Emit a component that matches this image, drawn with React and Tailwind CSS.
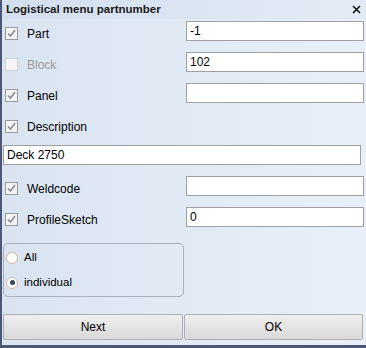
import { useState } from 'react';

function Check({ checked = true, disabled = false }) {
  return (
    <span
      className={`flex h-[13px] w-[13px] items-center justify-center border bg-[#f4f4f4] ${
        disabled ? 'border-[#d0d4da]' : 'border-[#9a9a9a]'
      }`}
    >
      {checked && (
        <svg width="9" height="9" viewBox="0 0 9 9">
          <path d="M1 4.5 L3.5 7 L8 1" fill="none" stroke="#8a8a8a" strokeWidth="1.5" />
        </svg>
      )}
    </span>
  );
}

function Field({ value = '', className = '' }) {
  return (
    <div
      className={`flex h-[20px] items-center border border-[#a0a0a0] bg-white px-[3px] text-[12px] text-black ${className}`}
    >
      {value}
    </div>
  );
}

function Row({ label, value, checked = true, disabled = false, noInput = false }) {
  return (
    <div className="flex h-[31px] items-start">
      <div className="mt-[6px] flex h-[13px] w-[181px] items-center pl-[3px]">
        <Check checked={checked} disabled={disabled} />
        <span className={`ml-[9px] text-[12px] ${disabled ? 'text-[#9a9a9a]' : 'text-black'}`}>{label}</span>
      </div>
      {!noInput && <Field value={value} className="ml-[3px] w-[178px]" />}
    </div>
  );
}

function Radio({ on }) {
  return (
    <span className="flex h-[12px] w-[12px] items-center justify-center rounded-full border border-[#d8b8a0] bg-white">
      {on && <span className="h-[5px] w-[5px] rounded-full bg-[#3a4660]" />}
    </span>
  );
}

export default function App() {
  const [mode, setMode] = useState('individual');

  return (
    <div className="h-[348px] w-[366px] overflow-hidden bg-[#4a5876] font-['Liberation_Sans',Arial,sans-serif] text-[11.5px]">
      <div className="ml-[2px] flex h-[345px] w-[364px] flex-col bg-gradient-to-r from-[#dae4f1] to-[#e8eff8]">
        {/* Title */}
        <div className="flex h-[19px] items-center justify-between bg-gradient-to-r from-[#d3dfee] to-[#e3ebf6] pl-[4px] pr-[5px]">
          <span className="text-[11.5px] font-bold text-[#1a1a1a]">Logistical menu partnumber</span>
          <svg width="9" height="9" viewBox="0 0 9 9">
            <path d="M1 1 L8 8 M8 1 L1 8" stroke="#111" strokeWidth="1.6" />
          </svg>
        </div>

        <div className="mt-[2px] flex flex-col">
          <Row label="Part" value="-1" />
          <Row label="Block" value="102" checked={false} disabled />
          <Row label="Panel" value="" />
          <Row label="Description" noInput />
          <div className="h-[31px]">
            <Field value="Deck 2750" className="ml-[1px] w-[358px]" />
          </div>
          <Row label="Weldcode" value="" />
          <Row label="ProfileSketch" value="0" />
        </div>

        <div className="ml-[1px] mt-[5px] flex h-[54px] w-[181px] flex-col justify-center gap-[8px] rounded-[5px] border border-[#a7afbc] pl-[2px]">
          <button className="flex h-[17px] items-center gap-[6px] text-black" onClick={() => setMode('all')}>
            <Radio on={mode === 'all'} />
            <span>All</span>
          </button>
          <button className="flex h-[17px] items-center gap-[6px] text-black" onClick={() => setMode('individual')}>
            <Radio on={mode === 'individual'} />
            <span>individual</span>
          </button>
        </div>

        <div className="ml-[1px] mt-[17px] flex gap-[1px]">
          <button className="h-[26px] w-[180px] rounded-[2px] border border-[#b0b0b0] bg-gradient-to-b from-[#efefef] to-[#d9d9d9] text-[12px] text-black">
            Next
          </button>
          <button className="h-[26px] w-[179px] rounded-[2px] border border-[#b0b0b0] bg-gradient-to-b from-[#efefef] to-[#d9d9d9] text-[12px] text-black">
            OK
          </button>
        </div>
      </div>
    </div>
  );
}
